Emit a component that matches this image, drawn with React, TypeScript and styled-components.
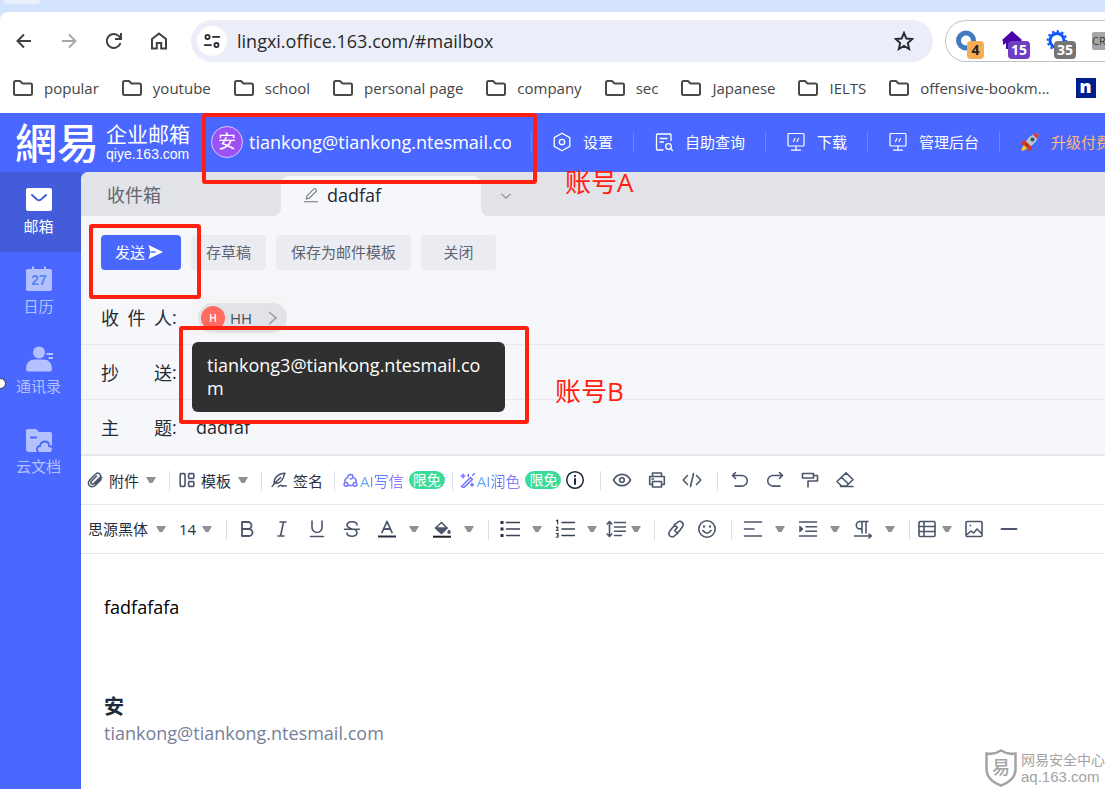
import React from "react";
import styled, { createGlobalStyle, css } from "styled-components";

const BLUE = "#4a68ff";
const INK = "#4b566b";
const RED = "#ff2010";
const LINE = "#e6e8ed";

const GlobalStyle = createGlobalStyle`
  *, *::before, *::after { box-sizing: border-box; }
  body {
    margin: 0;
    font-family: "Open Sans", "Noto Sans CJK SC", sans-serif;
    font-size: 15px;
    color: #262a33;
    overflow-x: hidden;
  }
  button, input, select {
    font: inherit;
    color: inherit;
    border: 0;
    padding: 0;
    margin: 0;
    background: none;
    outline: none;
  }
  button { cursor: pointer; }
  a { color: inherit; text-decoration: none; }
  p { margin: 0; }
  svg { display: block; flex: none; }
`;

const Page = styled.div`
  min-height: 100vh;
  display: flex;
  flex-direction: column;
  overflow: hidden;
  background: #fff;
`;

/* ---------- browser chrome ---------- */

const TabStrip = styled.div`
  height: 12px;
  background: #d3e3fd;
  padding-left: 4px;
`;
const TabEdge = styled.div`
  width: 36px;
  height: 4px;
  border-radius: 0 0 12px 12px;
  background: #e9effc;
`;
const Chrome = styled.div`
  background: #d3e3fd;
`;
const ChromeInner = styled.div`
  background: #fff;
  border-radius: 8px 0 0 0;
`;
const NavRow = styled.div`
  display: flex;
  align-items: center;
  height: 58px;
  padding-left: 1px;
`;
const NavButton = styled.button<{ $dim?: boolean }>`
  width: 45px;
  height: 42px;
  display: flex;
  align-items: center;
  justify-content: center;
  color: ${(p) => (p.$dim ? "#a8a8a8" : "#414141")};
`;
const Omnibox = styled.div`
  flex: 1;
  min-width: 0;
  height: 42px;
  margin: 0 12px 0 10px;
  padding: 0 19px 0 6px;
  display: flex;
  align-items: center;
  gap: 10px;
  border-radius: 21px;
  background: #ebeef8;
`;
const SiteInfo = styled.button`
  width: 30px;
  height: 30px;
  border-radius: 50%;
  background: #fff;
  display: flex;
  align-items: center;
  justify-content: center;
`;
const Address = styled.input`
  flex: 1;
  min-width: 0;
  height: 30px;
  font-size: 18px;
  color: #2a2a2a;
`;
const Extensions = styled.div`
  flex: none;
  width: 160px;
  height: 42px;
  padding-left: 8px;
  display: flex;
  align-items: center;
  gap: 16px;
  border: 1px solid #c3c3c3;
  border-right: 0;
  border-radius: 21px 0 0 21px;
  overflow: hidden;
`;
const Extension = styled.button`
  position: relative;
  flex: none;
  width: 30px;
  height: 40px;
`;
const ExtBadge = styled.span<{ $bg: string; $dark?: boolean }>`
  position: absolute;
  right: 0;
  bottom: 2px;
  height: 18px;
  min-width: 17px;
  padding: 0 3px;
  border-radius: 4px;
  background: ${(p) => p.$bg};
  color: ${(p) => (p.$dark ? "#222" : "#fff")};
  font-size: 14px;
  font-weight: 700;
  line-height: 18px;
  text-align: center;
`;
const CrBox = styled.span`
  flex: none;
  width: 24px;
  height: 18px;
  border-radius: 2px 0 0 2px;
  background: #a6a6a6;
  color: #3c3c3c;
  font-size: 11px;
  line-height: 17px;
`;
const Bookmarks = styled.nav`
  height: 43px;
  padding: 0 0 7px 12px;
  display: flex;
  align-items: center;
  gap: 22px;
  overflow: hidden;
  white-space: nowrap;
  color: #454545;
`;
const Bookmark = styled.a`
  flex: none;
  display: flex;
  align-items: center;
  gap: 10px;
`;
const BlueN = styled.span`
  width: 20px;
  height: 20px;
  margin-left: 4px;
  background: #001d8e;
  color: #fff;
  font-weight: 800;
  font-size: 18px;
  line-height: 17px;
  text-align: center;
`;

/* ---------- app header ---------- */

const Header = styled.header`
  height: 59px;
  padding: 0 0 2px 15px;
  background: ${BLUE};
  color: #fff;
  display: flex;
  align-items: center;
  white-space: nowrap;
`;
const Brand = styled.a`
  flex: none;
  display: flex;
  align-items: center;
  width: 196px;
  gap: 7px;
`;
const BrandMark = styled.span`
  font-family: "Noto Sans CJK TC", sans-serif;
  font-weight: 500;
  font-size: 42px;
  line-height: 42px;
  padding-bottom: 2px;
`;
const BrandText = styled.span`
  display: flex;
  flex-direction: column;
  padding-top: 1px;
  font-size: 21px;
  line-height: 24px;
`;
const BrandDomain = styled.span`
  font-family: "Liberation Sans", sans-serif;
  font-size: 14px;
  line-height: 17px;
`;
const Account = styled.div`
  position: relative;
  flex: none;
  display: flex;
  align-items: center;
  gap: 6px;
  margin-right: 20px;
`;
const Avatar = styled.span`
  width: 32px;
  height: 32px;
  border-radius: 50%;
  border: 1px solid #d9c8ff;
  background: #9b51f4;
  font-size: 18px;
  line-height: 29px;
  text-align: center;
`;
const AccountName = styled.span`
  width: 262px;
  overflow: hidden;
  font-size: 18px;
  font-weight: 500;
`;
const HeaderLink = styled.a<{ $accent?: boolean }>`
  flex: none;
  display: flex;
  align-items: center;
  gap: 11px;
  height: 20px;
  padding: 0 20px;
  border-left: 1px solid #6e87ff;
  color: ${(p) => (p.$accent ? "#ffb87a" : "#fff")};
`;

/* ---------- annotations ---------- */

const RedBox = styled.span<{ $inset: string }>`
  position: absolute;
  inset: ${(p) => p.$inset};
  z-index: 5;
  border: 4px solid ${RED};
  border-radius: 3px;
  pointer-events: none;
`;
const RedNote = styled.span<{ $left: number; $top: number }>`
  position: absolute;
  left: ${(p) => p.$left}px;
  top: ${(p) => p.$top}px;
  z-index: 5;
  color: ${RED};
  font-family: "Open Sans", "Noto Sans CJK SC", sans-serif;
  font-size: 26px;
  font-weight: 400;
  line-height: 32px;
  white-space: nowrap;
`;

/* ---------- sidebar ---------- */

const Body = styled.div`
  flex: 1;
  display: flex;
  background: ${BLUE};
`;
const Sidebar = styled.nav`
  position: relative;
  flex: none;
  width: 81px;
`;
const SideItem = styled.a<{ $active?: boolean }>`
  height: 80px;
  padding: 13px 4px 0 0;
  display: flex;
  flex-direction: column;
  align-items: center;
  gap: 1px;
  line-height: 24px;
  color: ${(p) => (p.$active ? "#fff" : "#b4c1ff")};
  ${(p) =>
    p.$active &&
    css`
      background: #435cd9;
    `}
`;
const Handle = styled.span`
  position: absolute;
  left: -5px;
  top: 206px;
  width: 11px;
  height: 11px;
  border-radius: 50%;
  border: 1px solid #333;
  background: #fff;
`;

/* ---------- compose ---------- */

const Main = styled.main`
  position: relative;
  flex: 1;
  min-width: 0;
  display: flex;
  flex-direction: column;
  border-radius: 8px 0 0 0;
  overflow: hidden;
  background: #f6f7fb;
`;
const Tabs = styled.div`
  display: flex;
  height: 44px;
  font-size: 18px;
  background: linear-gradient(#e2e3e8 22px, #f6f7fb 22px);
`;
const Tab = styled.button`
  flex: none;
  width: 200px;
  height: 44px;
  padding: 0 0 0 26px;
  text-align: left;
  line-height: 46px;
  color: #63666e;
  background: #e2e3e8;
  border-radius: 0 0 8px 0;
`;
const ActiveTab = styled.button`
  flex: none;
  width: 200px;
  height: 40px;
  margin-top: 4px;
  padding: 0 0 2px 22px;
  display: flex;
  align-items: center;
  gap: 8px;
  font-weight: 500;
  background: #f6f7fb;
  border-radius: 8px 8px 0 0;
`;
const TabRest = styled.div`
  flex: 1;
  display: flex;
  align-items: center;
  padding: 4px 0 0 18px;
  background: #e2e3e8;
  border-radius: 0 0 0 8px;
  color: #8d9099;
`;
const Actions = styled.div`
  display: flex;
  gap: 10px;
  padding: 19px 20px 20px;
`;
const SendWrap = styled.div`
  position: relative;
`;
const ActionButton = styled.button<{ $primary?: boolean }>`
  height: 35px;
  min-width: 75px;
  padding: 0 15px 2px;
  border-radius: 4px;
  display: flex;
  align-items: center;
  justify-content: center;
  background: #ebecf1;
  color: #5d6372;
  white-space: nowrap;
  ${(p) =>
    p.$primary &&
    css`
      min-width: 80px;
      padding-left: 14px;
      justify-content: flex-start;
      background: ${BLUE};
      color: #fff;
    `}
`;
const Field = styled.div<{ $last?: boolean }>`
  height: ${(p) => (p.$last ? 56 : 55)}px;
  padding-left: 20px;
  display: flex;
  align-items: center;
  border-bottom: ${(p) => (p.$last ? 2 : 1)}px solid ${LINE};
  font-size: 18px;
`;
const FieldLabel = styled.label`
  width: 71px;
  text-align-last: justify;
`;
const Colon = styled.span`
  width: 24px;
`;
const FieldInput = styled.input`
  flex: 1;
  min-width: 0;
  height: 40px;
  font-weight: 500;
`;
const ChipWrap = styled.div`
  position: relative;
  height: 40px;
  padding: 8px 0 2px 6px;
  margin: 0 0 4px -4px;
  background: #f4f4f4;
`;
const Chip = styled.button`
  height: 30px;
  width: 89px;
  padding: 0 10px 1px 3px;
  display: flex;
  align-items: center;
  border-radius: 15px;
  background: #e1e3e8;
  font-size: 15px;
  color: #4a4f5c;
`;
const ChipAvatar = styled.span`
  width: 24px;
  height: 24px;
  margin-right: 5px;
  border-radius: 50%;
  background: #ff6b5e;
  color: #fff;
  font-size: 10px;
  font-weight: 600;
  line-height: 24px;
`;
const ChipName = styled.span`
  flex: 1;
  text-align: left;
`;
const Tooltip = styled.div`
  position: absolute;
  left: 0;
  top: 47px;
  z-index: 4;
  width: 313px;
  padding: 12px 15px;
  border-radius: 6px;
  background: rgba(44, 44, 44, 0.98);
  color: #fff;
  font-size: 18px;
  font-weight: 500;
  line-height: 23px;
`;
const TooltipText = styled.span`
  display: block;
  word-break: break-all;
`;

/* ---------- editor ---------- */

const Toolbar = styled.div`
  height: 49px;
  flex: none;
  display: flex;
  align-items: center;
  padding-left: 6px;
  border-bottom: 1px solid ${LINE};
  background: #fff;
  color: ${INK};
  white-space: nowrap;
`;
const ToolButton = styled.button`
  flex: none;
  display: flex;
  align-items: center;
  gap: 6px;
  color: #262f42;
  svg { color: ${INK}; }
`;
const AiButton = styled.button`
  flex: none;
  display: flex;
  align-items: center;
  gap: 2px;
  color: #7076ff;
`;
const AiText = styled.span`
  background: linear-gradient(90deg, #5fb5f8, #5d7dff 50%, #a67cf6);
  background-clip: text;
  color: transparent;
`;
const Badge = styled.span`
  height: 18px;
  margin-left: 3px;
  padding: 0 4px;
  border-radius: 9px;
  background: #3ddb98;
  color: #fff;
  font-size: 14px;
  line-height: 17px;
`;
const Divider = styled.span<{ $before: number; $after: number }>`
  flex: none;
  width: 1px;
  height: 20px;
  margin: 2px ${(p) => p.$after}px 0 ${(p) => p.$before}px;
  background: #dcdfe8;
`;
const IconButton = styled.button<{ $w?: number }>`
  flex: none;
  width: ${(p) => p.$w ?? 35}px;
  height: 32px;
  display: flex;
  align-items: center;
  justify-content: center;
`;
const CaretShape = styled.span`
  flex: none;
  width: 10px;
  height: 6px;
  background: #8f9194;
  clip-path: polygon(0 0, 100% 0, 65% 100%, 35% 100%);
`;
const SelectWrap = styled.span<{ $w: number }>`
  flex: none;
  display: flex;
  align-items: center;
  justify-content: space-between;
  width: ${(p) => p.$w}px;
  margin: 0 12px 0 1px;
`;
const Select = styled.select`
  flex: 1;
  min-width: 0;
  appearance: none;
  color: #262f42;
`;
const Editor = styled.section`
  position: relative;
  flex: 1;
  padding: 40px 23px;
  background: #fff;
  font-size: 18px;
  line-height: 27px;
  color: #000;
`;
const Signature = styled.div`
  margin-top: 72px;
  color: #76809a;
`;
const SignName = styled.p`
  font-size: 20px;
  font-weight: 700;
  color: #20293a;
`;
const Watermark = styled.div`
  position: absolute;
  right: 0;
  bottom: 2px;
  display: flex;
  align-items: center;
  gap: 4px;
  color: #a3a3a3;
  font-size: 14px;
  line-height: 17px;
  white-space: nowrap;
`;
const WatermarkDomain = styled.p`
  font-family: "Liberation Sans", sans-serif;
  font-size: 15px;
`;

/* ---------- icons ---------- */

type IcProps = { children: React.ReactNode; size?: number; w?: number };
const Ic = ({ children, size = 20, w = 1.6 }: IcProps) => (
  <svg
    width={size}
    height={size}
    viewBox="0 0 20 20"
    fill="none"
    stroke="currentColor"
    strokeWidth={w}
    strokeLinecap="round"
    strokeLinejoin="round"
    aria-hidden="true"
  >
    {children}
  </svg>
);

const Folder = () => (
  <svg width="22" height="18" viewBox="0 0 22 18" fill="none" stroke="#4a4a4a" strokeWidth="2" strokeLinejoin="round" aria-hidden="true">
    <path d="M2 3.500Q2 2 3.500 2H8l2.500 2.500H18.500Q20 4.500 20 6V14.500Q20 16 18.500 16H3.500Q2 16 2 14.500Z" />
  </svg>
);
const Monitor = () => (
  <Ic w={1.2}>
    <rect x="2" y="1.500" width="16" height="12.500" rx="1" />
    <path d="M10 14v4M5.500 18.200h9M7.500 9.500l1.500-3M11 9.500l1.500-3" />
  </Ic>
);
const Rocket = () => (
  <svg width="20" height="20" viewBox="0 0 20 20" aria-hidden="true">
    <path d="M6 8 2 9.500 1 13l4-1Z M12 14l-1 4-3 1 .5-5Z" fill="#d9331f" />
    <path d="M18.500 1.500C13 1.500 8 5 5 11l4 4c6-3 9.500-8 9.500-13.500Z" fill="#b9c4cf" />
    <path d="M18.500 1.500c-2 0-4 .5-5.500 1.300l4.200 4.200c.8-1.500 1.300-3.500 1.300-5.500Z" fill="#e23a22" />
    <circle cx="12.500" cy="7.500" r="2" fill="#2c5575" />
    <path d="M5 11.500 2 16l-.5 3 3-.8L8.500 15Z" fill="#ffc928" />
    <path d="M6 9.500 4 13l3 3 3.500-2Z" fill="#c32a1c" />
  </svg>
);
const Search = () => (
  <Ic w={1.3}>
    <path d="M17 8.500V3a1 1 0 0 0-1-1H3.500a1 1 0 0 0-1 1v14a1 1 0 0 0 1 1H9M6 6.500h7M6 10h3.500M17 17l1.500 1.500" />
    <circle cx="14.500" cy="14.500" r="2.800" />
  </Ic>
);

const Caret = ({ w = 20, label }: { w?: number; label: string }) => (
  <IconButton $w={w} aria-label={label}>
    <CaretShape />
  </IconButton>
);

const bookmarks = ["popular", "youtube", "school", "personal page", "company", "sec", "Japanese", "IELTS", "offensive-bookm..."];

export default function App() {
  return (
    <Page>
      <GlobalStyle />
      <TabStrip>
        <TabEdge />
      </TabStrip>
      <Chrome>
        <ChromeInner>
          <NavRow>
            <NavButton aria-label="Back">
              <Ic w={2}><path d="M17 10H4M10 3.500 3.500 10l6.500 6.500" strokeLinecap="butt" strokeLinejoin="miter" /></Ic>
            </NavButton>
            <NavButton aria-label="Forward" $dim>
              <Ic w={2}><path d="M3 10h13M10 3.500l6.500 6.500-6.500 6.500" strokeLinecap="butt" strokeLinejoin="miter" /></Ic>
            </NavButton>
            <NavButton aria-label="Reload">
              <Ic w={2}>
                <path d="M16.500 12A7 7 0 1 1 15 5.200L17 7.200" strokeLinecap="butt" />
                <path d="M17 2v6h-6" strokeLinecap="butt" strokeLinejoin="miter" />
              </Ic>
            </NavButton>
            <NavButton aria-label="Home">
              <Ic w={2}><path d="M3 8 10 2.500 17 8V17.500H12.200V12H7.800V17.500H3Z" strokeLinejoin="miter" /></Ic>
            </NavButton>
            <Omnibox>
              <SiteInfo aria-label="Site information">
                <Ic size={18} w={2}>
                  <circle cx="5" cy="5.500" r="2.300" />
                  <path d="M11 5.500h7M2 14.500H9" />
                  <circle cx="15" cy="14.500" r="2.300" />
                </Ic>
              </SiteInfo>
              <Address aria-label="Address" defaultValue="lingxi.office.163.com/#mailbox" />
              <Ic w={1.900}><path d="M10 1.800 12.300 7.500 18.300 8 13.800 12l1.400 6L10 14.900 4.800 18l1.400-6L1.700 8l6-.5Z" strokeLinejoin="miter" /></Ic>
            </Omnibox>
            <Extensions>
              <Extension aria-label="Extension, 4">
                <svg width="22" height="22" viewBox="0 0 22 22" fill="none" aria-hidden="true">
                  <circle cx="12" cy="10.500" r="7.500" stroke="#4379bd" strokeWidth="5" />
                </svg>
                <ExtBadge $bg="#f6ad55" $dark>4</ExtBadge>
              </Extension>
              <Extension aria-label="Extension, 15">
                <svg width="24" height="20" viewBox="0 0 24 20" aria-hidden="true">
                  <path d="M12 0 22 9l-1 1H19v8H6V12L3 14V10L2 9Z" fill="#4a03a8" />
                </svg>
                <ExtBadge $bg="#6f3cc4">15</ExtBadge>
              </Extension>
              <Extension aria-label="Extension, 35">
                <svg width="24" height="22" viewBox="0 0 24 22" fill="none" stroke="#0d52ff" aria-hidden="true">
                  <circle cx="11" cy="10.500" r="7" strokeWidth="3" />
                  <circle cx="11" cy="10.500" r="9.300" strokeWidth="2" strokeDasharray="2.400 2.400" />
                </svg>
                <ExtBadge $bg="#757575">35</ExtBadge>
              </Extension>
              <CrBox>CR</CrBox>
            </Extensions>
          </NavRow>
          <Bookmarks aria-label="Bookmarks">
            {bookmarks.map((b) => (
              <Bookmark key={b} href="#">
                <Folder />
                {b}
              </Bookmark>
            ))}
            <Bookmark href="#"><BlueN>n</BlueN></Bookmark>
          </Bookmarks>
        </ChromeInner>
      </Chrome>

      <Header>
        <Brand href="#">
          <BrandMark>網易</BrandMark>
          <BrandText>
            企业邮箱
            <BrandDomain>qiye.163.com</BrandDomain>
          </BrandText>
        </Brand>
        <Account>
          <Avatar>安</Avatar>
          <AccountName>tiankong@tiankong.ntesmail.com</AccountName>
          <RedBox $inset="-13px -26px -26px -9px" />
          <RedNote $left={354} $top={40}>账号A</RedNote>
        </Account>
        <HeaderLink href="#">
          <Ic w={1.300}>
            <path d="M10 1.200 17.800 5.600V14.400L10 18.800 2.200 14.400V5.600Z" />
            <circle cx="10" cy="10" r="2.700" />
          </Ic>
          设置
        </HeaderLink>
        <HeaderLink href="#"><Search />自助查询</HeaderLink>
        <HeaderLink href="#"><Monitor />下载</HeaderLink>
        <HeaderLink href="#"><Monitor />管理后台</HeaderLink>
        <HeaderLink href="#" $accent><Rocket />升级付费</HeaderLink>
      </Header>

      <Body>
        <Sidebar aria-label="Modules">
          <SideItem href="#" $active>
            <svg width="28" height="28" viewBox="0 0 28 28" aria-hidden="true">
              <rect x="1" y="3" width="26" height="23" rx="2" fill="#fff" />
              <path d="M7 10l5 4.500q2 1.500 4 0L21 10" fill="none" stroke="#435cd9" strokeWidth="2" strokeLinecap="round" />
            </svg>
            邮箱
          </SideItem>
          <SideItem href="#">
            <svg width="28" height="28" viewBox="0 0 28 28" aria-hidden="true">
              <path d="M3 4H7V1.500H9V4H19V1.500H21V4H25Q27 4 27 6V24Q27 26 25 26H3Q1 26 1 24V6Q1 4 3 4Z" fill="#b4c1ff" />
              <text x="14" y="20" textAnchor="middle" fontSize="14" fontWeight="700" fontFamily="Liberation Sans, sans-serif" fill="#5c86f5">27</text>
            </svg>
            日历
          </SideItem>
          <SideItem href="#">
            <svg width="28" height="28" viewBox="0 0 28 28" fill="#b4c1ff" aria-hidden="true">
              <circle cx="14" cy="7.500" r="6" />
              <path d="M1 24Q1 14.500 10 14.500H18Q27 14.500 27 24Q27 26.500 25 26.500H3Q1 26.500 1 24Z" />
              <path d="M21.500 9h6.500M23.500 13h4.500" stroke="#b4c1ff" strokeWidth="2" />
            </svg>
            通讯录
          </SideItem>
          <SideItem href="#">
            <svg width="28" height="28" viewBox="0 0 28 28" aria-hidden="true">
              <path d="M1 6Q1 4 3 4H11L14 7H25Q27 7 27 9V24Q27 27 24 27H4Q1 27 1 24Z" fill="#b4c1ff" />
              <path d="M5 12.500h7" stroke={BLUE} strokeWidth="2" />
              <path d="M14 28C10.500 25 12 21 15 21c1-6 9-6 9 0 4 0 5 4 2 7Z" fill="#b4c1ff" stroke={BLUE} strokeWidth="1.800" />
            </svg>
            云文档
          </SideItem>
          <Handle />
        </Sidebar>

        <Main>
          <Tabs>
            <Tab>收件箱</Tab>
            <ActiveTab>
              <Ic size={16} w={1.300}>
                <path d="M4 15 5 11 13.500 2.500q1-1 2 0l1 1q1 1 0 2L8 14ZM2 18.500H18" stroke="#6d717c" />
              </Ic>
              dadfaf
            </ActiveTab>
            <TabRest>
              <Ic size={14} w={1.600}><path d="M4 7.500 10 13 16 7.500" /></Ic>
            </TabRest>
          </Tabs>
          <Actions>
            <SendWrap>
              <ActionButton $primary>
                发送
                <svg width="18" height="16" viewBox="0 0 18 16" aria-hidden="true">
                  <path d="M3.500 1 18 8 3.500 15 5 9.500V6.500Z" fill="#fff" />
                  <path d="M5.500 8h5" stroke={BLUE} strokeWidth="1.300" />
                </svg>
              </ActionButton>
              <RedBox $inset="-11px -20px -29px -12px" />
            </SendWrap>
            <ActionButton>存草稿</ActionButton>
            <ActionButton>保存为邮件模板</ActionButton>
            <ActionButton>关闭</ActionButton>
          </Actions>
          <Field>
            <FieldLabel as="span">收件人</FieldLabel>
            <Colon>:</Colon>
            <ChipWrap>
              <Chip aria-describedby="recipient-address">
                <ChipAvatar>H</ChipAvatar>
                <ChipName>HH</ChipName>
                <svg width="9" height="14" viewBox="0 0 9 14" fill="none" stroke="#9a9da6" strokeWidth="1.500" aria-hidden="true">
                  <path d="M1 1l7 6-7 6" />
                </svg>
              </Chip>
              <Tooltip role="tooltip" id="recipient-address">
                <TooltipText>tiankong3@tiankong.ntesmail.com</TooltipText>
                <RedBox $inset="-16px -24px -12px -13px" />
                <RedNote $left={363} $top={33}>账号B</RedNote>
              </Tooltip>
            </ChipWrap>
          </Field>
          <Field>
            <FieldLabel htmlFor="cc">抄送</FieldLabel>
            <Colon>:</Colon>
            <FieldInput id="cc" />
          </Field>
          <Field $last>
            <FieldLabel htmlFor="subject">主题</FieldLabel>
            <Colon>:</Colon>
            <FieldInput id="subject" defaultValue="dadfaf" />
          </Field>

          <Toolbar role="toolbar" aria-label="Insert">
            <ToolButton>
              <Ic size={16} w={1.900}>
                <path d="M17.500 9.500 10 17A4.600 4.600 0 0 1 3 10.500L11 2.500A3.300 3.300 0 0 1 16 7L8.500 14.500A2 2 0 0 1 5.500 11.500L12 5M18.500 6.500 10.500 14.500" />
              </Ic>
              附件
            </ToolButton>
            <Caret w={24} label="附件选项" />
            <Divider $before={6} $after={9} />
            <ToolButton>
              <Ic size={16} w={2}>
                <rect x="1.500" y="2" width="6" height="16" rx="1" />
                <rect x="12" y="2" width="6.500" height="6" rx="1" />
                <rect x="12" y="12" width="6.500" height="6" rx="1" />
              </Ic>
              模板
            </ToolButton>
            <Caret w={24} label="模板选项" />
            <Divider $before={6} $after={9} />
            <ToolButton>
              <Ic size={16} w={1.900}>
                <path d="M1.500 18C5 13 8 10 12 7M4 14.500C3 8 8 2 17.500 1.500 15 5 17 6 14.500 8.500 13 12 9 14.500 4 14.500M9 18.500c3-3 5-2 5-.5 2-1 3-1 5-.5" />
              </Ic>
              签名
            </ToolButton>
            <Divider $before={11} $after={8} />
            <AiButton>
              <Ic size={15} w={2}>
                <circle cx="4" cy="15" r="2.500" />
                <circle cx="16" cy="15" r="2.500" />
                <path d="M7 16.500h5.500M2.500 11.500C2.500 9 4 7 5.500 6.500M17.500 11.500C17.500 9 16 7 14.500 6.500M6.500 5.500A3.500 3.500 0 0 1 13.500 5.500Q12 8 9.500 8" />
              </Ic>
              <AiText>AI写信</AiText>
              <Badge>限免</Badge>
            </AiButton>
            <Divider $before={7} $after={7} />
            <AiButton>
              <Ic size={15} w={2}>
                <path d="M2 18 14 6l2.500 2.500L5 19.500ZM17 3l2-2M4 1.500v5M1.500 4h5M11 1.500v3M16 13.500v4M14 15.500h4" />
              </Ic>
              <AiText>AI润色</AiText>
              <Badge>限免</Badge>
            </AiButton>
            <IconButton $w={28} aria-label="说明">
              <Ic w={1.500}>
                <circle cx="10" cy="10" r="8.300" stroke="#1f2737" />
                <path d="M10 9v5M10 5.800v.4" stroke="#1f2737" strokeWidth="2" />
              </Ic>
            </IconButton>
            <Divider $before={11} $after={3} />
            <IconButton aria-label="预览">
              <Ic><path d="M1.500 10C5.500 2.500 14.500 2.500 18.500 10 14.500 17.500 5.500 17.500 1.500 10Z" /><circle cx="10" cy="10" r="2.300" /></Ic>
            </IconButton>
            <IconButton aria-label="打印">
              <Ic>
                <path d="M5.500 6.500V3h9v3.500M5.500 14.500H2.700v-8H17.300v8H14.500M5.500 11.500h9V17h-9ZM5 9h1.500" />
              </Ic>
            </IconButton>
            <IconButton aria-label="源代码">
              <Ic><path d="M5.500 5.500 1.200 10l4.300 4.500M14.500 5.500l4.300 4.500-4.300 4.500M11.500 3.500l-3 13" /></Ic>
            </IconButton>
            <Divider $before={8} $after={4} />
            <IconButton aria-label="撤销">
              <Ic><path d="M2.500 5.500H12a5.300 5.300 0 0 1 0 10.600H5M5.500 2.500l-3 3 3 3" /></Ic>
            </IconButton>
            <IconButton aria-label="重做">
              <Ic><path d="M17.500 5.500H8a5.300 5.300 0 0 0 0 10.600h7M14.500 2.500l3 3-3 3" /></Ic>
            </IconButton>
            <IconButton aria-label="格式刷">
              <Ic><path d="M2.500 3.500h11v4.500h-11ZM13.500 5.500H17.500V11H8V17" /></Ic>
            </IconButton>
            <IconButton aria-label="清除格式">
              <Ic><path d="M6.500 16 2 11.500 11 2.800 18 9.500 11.500 16ZM6.500 7.300l6.500 6.500M5.500 16.500h12.500" /></Ic>
            </IconButton>
          </Toolbar>

          <Toolbar role="toolbar" aria-label="Format">
            <SelectWrap $w={78}>
              <Select aria-label="字体" defaultValue="a"><option value="a">思源黑体</option></Select>
              <CaretShape />
            </SelectWrap>
            <SelectWrap $w={33}>
              <Select aria-label="字号" defaultValue="14"><option value="14">14</option></Select>
              <CaretShape />
            </SelectWrap>
            <Divider $before={2} $after={2} />
            <IconButton aria-label="加粗">
              <Ic><path d="M5 3h6a3.500 3.500 0 0 1 0 7H5ZM5 10h7a3.500 3.500 0 0 1 0 7H5Z" strokeWidth="1.800" /></Ic>
            </IconButton>
            <IconButton aria-label="斜体">
              <Ic><path d="M8 3h6M6 17h6M11.500 3l-3 14" /></Ic>
            </IconButton>
            <IconButton aria-label="下划线">
              <Ic><path d="M5 2v6.500a5 5 0 0 0 10 0V2M3.500 17.500h13" /></Ic>
            </IconButton>
            <IconButton aria-label="删除线">
              <Ic><path d="M15 6c0-4-10-4.500-10 0 0 2 2 3 5 4M5 14c0 4 10 4.500 10 0 0-1.500-.5-2.500-1.500-3M2.500 10.200h15" /></Ic>
            </IconButton>
            <IconButton aria-label="文字颜色">
              <Ic><path d="M5 13.500 10 2.500l5 11M7 10h6" strokeWidth="1.800" /><path d="M1 17.500h18" stroke="#262f42" strokeWidth="2" strokeLinecap="butt" /></Ic>
            </IconButton>
            <Caret label="文字颜色选项" />
            <IconButton aria-label="背景颜色">
              <Ic>
                <path d="M3.500 9 9.500 3.500 15 9l-5.500 5.500Z" />
                <path d="M4 9h11l-5.500 5Z" fill="currentColor" />
                <path d="M17 11.500c1.500 2 1 2.500 0 2.500s-1.500-.5 0-2.500Z" fill="currentColor" />
                <path d="M1 17.700h18" stroke="#222" strokeWidth="2" strokeLinecap="butt" />
              </Ic>
            </IconButton>
            <Caret label="背景颜色选项" />
            <Divider $before={9} $after={3} />
            <IconButton aria-label="无序列表">
              <Ic>
                <path d="M6.500 3.500h13M6.500 10h13M6.500 16.500h13" stroke="#3a4254" />
                <path d="M.5 2h3v3h-3ZM.5 8.500h3v3h-3ZM.5 15h3v3h-3Z" fill="#2c3242" stroke="none" />
              </Ic>
            </IconButton>
            <Caret label="无序列表选项" />
            <IconButton aria-label="有序列表">
              <Ic>
                <path d="M7 3.500h12.500M7 10h12.500M7 16.500h12.500" stroke="#3a4254" />
                <path d="M1.500 1.800 2.700 1V5M1.300 8.300c1-1 2.400 0 1.500 1.200L1.300 11.300H3.500M1.300 14.500H3.300L2.300 16c1.500 0 1.500 2.300-.1 2.300L1.200 18" strokeWidth="1.100" stroke="#2c3242" />
              </Ic>
            </IconButton>
            <Caret label="有序列表选项" />
            <IconButton $w={28} aria-label="行高">
              <Ic>
                <path d="M3.500 3v14M1.200 5l2.300-2.500L5.800 5M1.200 15l2.300 2.500L5.800 15M8.500 3.500h11M8.500 8h11M8.500 12.300h11M8.500 16.500h7" />
              </Ic>
            </IconButton>
            <Caret w={12} label="行高选项" />
            <Divider $before={12} $after={3} />
            <IconButton aria-label="链接">
              <Ic size={18} w={1.800}>
                <path d="M8 5.500 11.500 2.800a3.700 3.700 0 0 1 5.500 5L13.500 12.500q-1.500 1.500-3.500 1M12 14.500 8.500 17.500a3.700 3.700 0 0 1-5.500-5L6.500 8q1.500-1.500 3.500-1M8.500 12l3-4" />
              </Ic>
            </IconButton>
            <IconButton $w={28} aria-label="表情">
              <Ic>
                <circle cx="10" cy="10" r="8.200" />
                <path d="M6 11.500q4 5.500 8 0" />
                <path d="M7 7.300v.4M13 7.300v.4" strokeWidth="2.200" />
              </Ic>
            </IconButton>
            <Divider $before={10} $after={3} />
            <IconButton aria-label="对齐">
              <Ic><path d="M1.500 3h17M1.500 10h9.500M1.500 17h17" /></Ic>
            </IconButton>
            <Caret label="对齐选项" />
            <IconButton aria-label="缩进">
              <Ic><path d="M1.500 3h17M8 7.700h10.500M8 12.300h10.500M1.500 17h17" /><path d="M2 7.300 5 10l-3 2.700Z" fill="currentColor" strokeWidth="1" /></Ic>
            </IconButton>
            <Caret label="缩进选项" />
            <IconButton aria-label="文字方向">
              <Ic><path d="M15 2.500H7a3.700 3.700 0 0 0 0 7.400H9M9 2.500V14M13 2.500V14M1.500 17h16.500M16 15l2.500 2-2.500 2" /></Ic>
            </IconButton>
            <Caret label="文字方向选项" />
            <Divider $before={9} $after={3} />
            <IconButton $w={28} aria-label="表格">
              <Ic><rect x="2" y="2.500" width="16" height="15" rx="1" /><path d="M7 2.500v15M2 7.500h16M2 12.500h16" /></Ic>
            </IconButton>
            <Caret w={12} label="表格选项" />
            <IconButton $w={42} aria-label="图片">
              <Ic><rect x="2" y="2.500" width="16" height="15" rx="1" /><path d="M3 15.500 7 12l2.500 2L13 10l4.500 4.500M6.300 6.300v.4" /></Ic>
            </IconButton>
            <IconButton $w={28} aria-label="分割线">
              <Ic><path d="M2.500 10h15" strokeWidth="1.800" /></Ic>
            </IconButton>
          </Toolbar>

          <Editor>
            <p>fadfafafa</p>
            <Signature>
              <SignName>安</SignName>
              <p>tiankong@tiankong.ntesmail.com</p>
            </Signature>
            <Watermark>
              <svg width="32" height="38" viewBox="0 0 32 38" fill="none" stroke="#a3a3a3" aria-hidden="true">
                <path d="M1.500 4.500Q9 6 16 1.500 23 6 30.500 4.500V20Q30.500 31 16 36.500 1.500 31 1.500 20Z" strokeWidth="2.500" />
                <text x="16" y="25" textAnchor="middle" fontSize="18" fontWeight="500" fontFamily="Noto Sans CJK SC, sans-serif" fill="#a3a3a3" stroke="none">易</text>
              </svg>
              <div>
                <p>网易安全中心</p>
                <WatermarkDomain>aq.163.com</WatermarkDomain>
              </div>
            </Watermark>
          </Editor>
        </Main>
      </Body>
    </Page>
  );
}
